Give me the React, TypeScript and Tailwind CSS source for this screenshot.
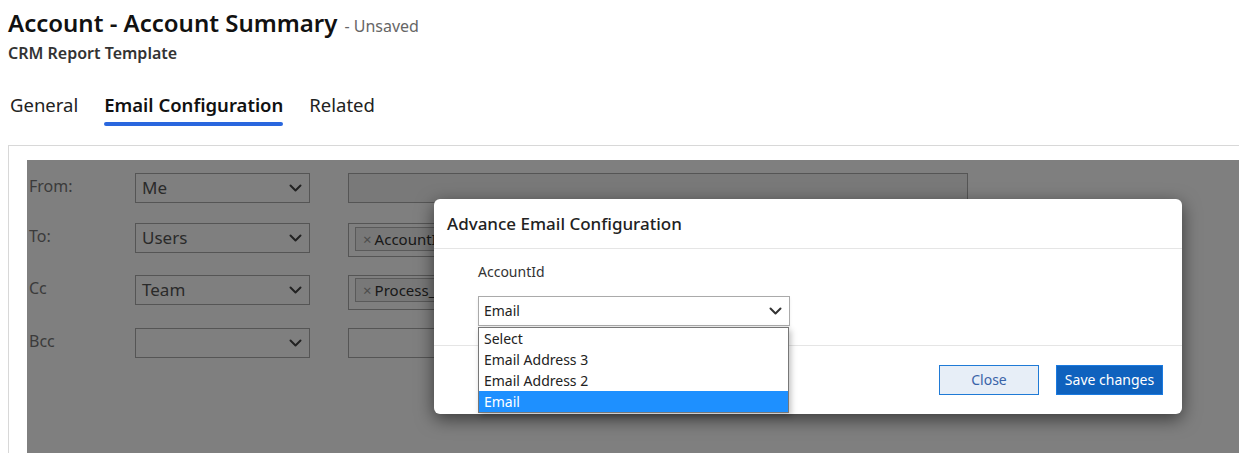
import React from "react";

const Chevron = ({ className = "" }: { className?: string }) => (
  <svg width="13" height="8" viewBox="0 0 13 8" className={className} fill="none">
    <path d="M1.5 1.5 L6.5 6.5 L11.5 1.5" stroke="currentColor" strokeWidth="2" strokeLinecap="round" strokeLinejoin="round" />
  </svg>
);

const FakeSelect = ({ value }: { value: string }) => (
  <div className="w-[175px] h-[30px] border border-[#aaaaaa] bg-white flex items-center justify-between pl-[6px] pr-[7px] text-[17px] text-[#555]">
    <span>{value}</span>
    <Chevron className="text-[#444]" />
  </div>
);

const Tag = ({ label }: { label: string }) => (
  <div className="h-[24px] border border-[#b5b5b5] bg-[#f0f0f0] flex items-center pl-[7px] pr-[6px] text-[15px] text-[#333] whitespace-nowrap">
    <span className="text-[#999] text-[15px] mr-[3px]">×</span>
    {label}
  </div>
);

export default function App() {
  return (
    <div
      className="w-[1239px] h-[453px] bg-white overflow-hidden relative"
      style={{ fontFamily: '"Segoe UI", "Noto Sans", "Open Sans", sans-serif' }}
    >
      {/* header */}
      <div className="pl-[8px] pt-[5px]">
        <div className="flex items-baseline">
          <span className="text-[24px] font-semibold text-[#111] leading-[36px]">Account - Account Summary</span>
          <span className="ml-[7px] text-[16px] text-[#666]">- Unsaved</span>
        </div>
        <div className="text-[16px] font-semibold text-[#333] leading-[20px] mt-[2px]">CRM Report Template</div>
      </div>

      {/* tabs */}
      <div className="flex pl-[10px] mt-[28px] gap-[26px] text-[18.5px] text-[#222]">
        <div className="pb-[7px]">General</div>
        <div className="relative pb-[7px] font-semibold text-[#111]">
          Email Configuration
          <div className="absolute left-0 right-0 bottom-0 h-[4px] rounded-full bg-[#2a67de]" />
        </div>
        <div className="pb-[7px]">Related</div>
      </div>

      {/* panel */}
      <div className="ml-[8px] mt-[19px] border-l border-t border-[#d8d8d8] pt-[14px] pl-[18px] h-[400px]">
        <div className="relative h-[300px] bg-white">
          {/* form */}
          <div className="pt-[13px] pl-[2px]">
            <div className="flex items-start">
              <div className="w-[106px] text-[16px] text-[#777] leading-[26px]">From:</div>
              <FakeSelect value="Me" />
              <div className="ml-[38px] w-[620px] h-[30px] border border-[#aaaaaa] bg-[#f3f3f3]" />
            </div>
            <div className="flex items-start mt-[20px]">
              <div className="w-[106px] text-[16px] text-[#777] leading-[26px]">To:</div>
              <FakeSelect value="Users" />
              <div className="ml-[38px] w-[620px] h-[34px] border border-[#aaaaaa] bg-white pl-[6px] pt-[3px]">
                <div className="inline-block"><Tag label="AccountId" /></div>
              </div>
            </div>
            <div className="flex items-start mt-[18px]">
              <div className="w-[106px] text-[16px] text-[#777] leading-[26px]">Cc</div>
              <FakeSelect value="Team" />
              <div className="ml-[38px] w-[620px] h-[35px] border border-[#aaaaaa] bg-white pl-[6px] pt-[2px]">
                <div className="inline-block"><Tag label="Process_Team" /></div>
              </div>
            </div>
            <div className="flex items-start mt-[18px]">
              <div className="w-[106px] text-[16px] text-[#777] leading-[26px]">Bcc</div>
              <FakeSelect value="" />
              <div className="ml-[38px] w-[620px] h-[30px] border border-[#aaaaaa] bg-white" />
            </div>
          </div>

          {/* backdrop */}
          <div className="absolute inset-0 bg-black/50" />

          {/* modal */}
          <div className="absolute left-[407px] top-[39px] w-[748px] bg-white rounded-[6px] shadow-[0_5px_18px_rgba(0,0,0,0.55)]">
            <div className="h-[50px] border-b border-[#e5e5e5] flex items-center pl-[13px]">
              <span className="text-[17px] font-medium text-[#222]">Advance Email Configuration</span>
            </div>
            <div className="h-[96px] pl-[44px] pt-[13px]">
              <div className="text-[14px] text-[#333] leading-[20px]">AccountId</div>
              <div className="relative mt-[14px] w-[312px]">
                <div className="h-[30px] border border-[#aaaaaa] bg-white flex items-center justify-between pl-[5px] pr-[7px] text-[14px] text-[#222] shadow-[0_2px_3px_rgba(0,0,0,0.08)]">
                  <span>Email</span>
                  <Chevron className="text-[#333]" />
                </div>
                <div className="absolute left-0 top-[31px] w-[311px] border border-[#777] bg-white text-[14px] text-[#222] leading-[21px] shadow-[2px_3px_6px_rgba(0,0,0,0.25)] z-10">
                  <div className="pl-[5px]">Select</div>
                  <div className="pl-[5px]">Email Address 3</div>
                  <div className="pl-[5px]">Email Address 2</div>
                  <div className="pl-[5px] bg-[#1e90ff] text-white">Email</div>
                </div>
              </div>
            </div>
            <div className="border-t border-[#e5e5e5] h-[69px] flex justify-end items-start pt-[19px] pr-[19px] gap-[17px]">
              <button className="w-[100px] h-[30px] bg-[#e7eef7] border border-[#1f7ad6] text-[#3a63a8] text-[14px]">Close</button>
              <button className="w-[107px] h-[30px] bg-[#0f62be] border border-[#1a7ae0] text-white text-[14px]">Save changes</button>
            </div>
          </div>
        </div>
      </div>
    </div>
  );
}
